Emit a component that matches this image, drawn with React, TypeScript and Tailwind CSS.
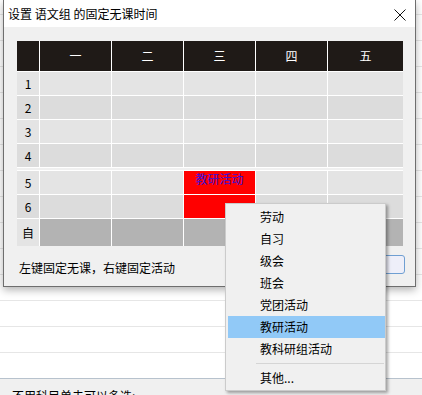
import React from "react";

const COLUMNS = ["一", "二", "三", "四", "五"];
const GRID = "grid grid-cols-[22px_71px_71px_71px_71px_75px] gap-x-px";
const MENU_ITEMS = ["劳动", "自习", "级会", "班会", "党团活动", "教研活动", "教科研组活动"];
const ACTIVE_ITEM = "教研活动";

type Row = { label: string; tone: string; height: string };

const TOP_ROWS: Row[] = [
  { label: "1", tone: "bg-[#e4e4e4]", height: "h-[23px]" },
  { label: "2", tone: "bg-[#dcdcdc]", height: "h-[23px]" },
  { label: "3", tone: "bg-[#e4e4e4]", height: "h-[23px]" },
  { label: "4", tone: "bg-[#dcdcdc]", height: "h-[23px]" },
];

function TableRow({ row, redColumn }: { row: Row; redColumn?: { col: number; text?: string } }) {
  return (
    <div className={`${GRID} ${row.height}`}>
      <div className={`flex items-center justify-center ${row.tone} text-[12px] text-black`}>
        {row.label}
      </div>
      {COLUMNS.map((c, i) => {
        const isRed = redColumn && redColumn.col === i;
        return (
          <div
            key={c}
            className={`flex justify-center text-[12px] leading-4 ${isRed ? "bg-[#ff0000] text-[#3b12d6]" : row.tone}`}
          >
            {isRed ? redColumn?.text : null}
          </div>
        );
      })}
    </div>
  );
}

function ContextMenu() {
  return (
    <div className="absolute left-[225px] top-[203px] w-[161px] border border-[#cbcbcb] bg-[#f0f0f0] pt-[2px] pb-px text-[12px] text-black shadow-[2px_2px_3px_rgba(0,0,0,0.35)]">
      {MENU_ITEMS.map((item) => (
        <div
          key={item}
          className={`ml-[2px] flex h-[22px] items-center pl-[32px] ${item === ACTIVE_ITEM ? "bg-[#91c9f7]" : ""}`}
        >
          {item}
        </div>
      ))}
      <div className="flex h-[7px] items-center">
        <div className="ml-[30px] mr-px h-px flex-1 bg-[#d5d5d5]" />
      </div>
      <div className="ml-[2px] flex h-[22px] items-center pl-[32px]">其他...</div>
    </div>
  );
}

export default function App() {
  const bgRows = Array.from({ length: 14 });

  return (
    <div className="relative h-[395px] w-[422px] overflow-hidden bg-white font-['Noto_Sans_CJK_SC','Noto_Sans',sans-serif]">
      {/* page behind the dialog */}
      <div className="flex h-full flex-col">
        <div className="h-[380px] pt-[14px]">
          {bgRows.map((_, i) => (
            <div key={i} className="h-[26px] border-t border-[#e6e6e6]" />
          ))}
        </div>
        <div className="flex-1 border-t border-[#b7c2cd] bg-[#f0f0f0] pl-[12px] pt-[9px] text-[12px] leading-4 text-black">
          不用科目单击可以多选:
        </div>
      </div>

      {/* dialog */}
      <div className="absolute left-[3px] top-0 flex h-[287px] w-[413px] flex-col border border-t-0 border-[#6e6e6e] bg-[#f0f0f0] shadow-[0_3px_8px_rgba(0,0,0,0.3)]">
        <div className="flex h-[27px] items-center justify-between bg-white pl-[4px] pr-[9px] pt-px">
          <span className="text-[12px] text-black">设置 语文组 的固定无课时间</span>
          <svg width="12" height="12" viewBox="0 0 12 12" className="mt-px">
            <path d="M0.5 0.5 L11.5 11.5 M11.5 0.5 L0.5 11.5" stroke="#111" strokeWidth="1" fill="none" />
          </svg>
        </div>

        <div className="pl-[13px] pr-[11px] pt-[14px]">
          <div className="flex w-[386px] flex-col gap-y-px bg-white">
            <div className={`${GRID} h-[30px]`}>
              <div className="bg-[#1f1a17]" />
              {COLUMNS.map((c) => (
                <div key={c} className="flex items-center justify-center bg-[#1f1a17] text-[12px] text-white">
                  {c}
                </div>
              ))}
            </div>
            {TOP_ROWS.map((row) => (
              <TableRow key={row.label} row={row} />
            ))}
            <div className="h-[2px] bg-[#f0f0f0]" />
            <TableRow
              row={{ label: "5", tone: "bg-[#e4e4e4]", height: "h-[23px]" }}
              redColumn={{ col: 2, text: "教研活动" }}
            />
            <TableRow row={{ label: "6", tone: "bg-[#dcdcdc]", height: "h-[23px]" }} redColumn={{ col: 2 }} />
            <div className={`${GRID} h-[27px]`}>
              <div className="flex items-center justify-center bg-[#e4e4e4] text-[12px] text-black">自</div>
              {COLUMNS.map((c) => (
                <div key={c} className="bg-[#b3b3b3]" />
              ))}
            </div>
          </div>

          <div className="mt-[9px] flex items-start justify-between">
            <span className="ml-[2px] mt-[5px] text-[12px] leading-4 text-black">
              左键固定无课，右键固定活动
            </span>
            <div className="-mr-px h-[19px] w-[75px] rounded-[3px] border border-[#6f9fd2] bg-[#eeeff9]" />
          </div>
        </div>
      </div>

      <ContextMenu />
    </div>
  );
}
